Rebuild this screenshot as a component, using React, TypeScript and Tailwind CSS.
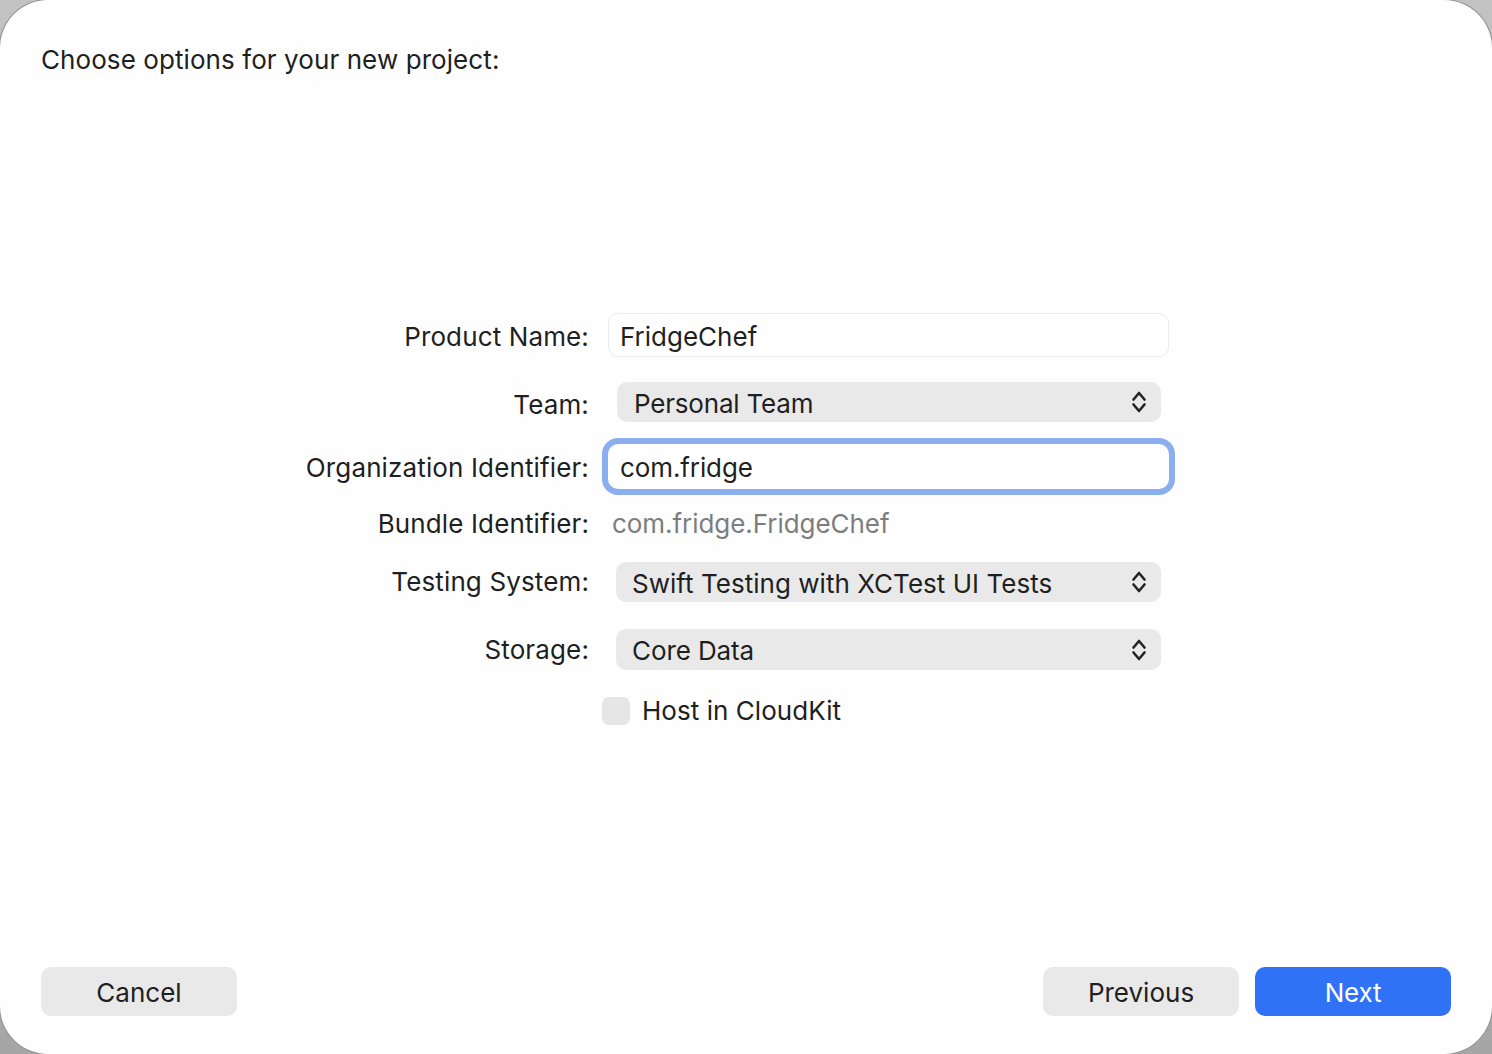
import { ReactNode } from "react";

const font = { fontFamily: "Inter, 'Noto Sans', sans-serif" };

function Chevrons() {
  return (
    <svg width="16" height="26" viewBox="0 0 16 26" fill="none" className="shrink-0">
      <path d="M2.5 10.5 L8 4 L13.5 10.5" stroke="#232323" strokeWidth="2.6" strokeLinecap="round" strokeLinejoin="round" />
      <path d="M2.5 15.5 L8 22 L13.5 15.5" stroke="#232323" strokeWidth="2.6" strokeLinecap="round" strokeLinejoin="round" />
    </svg>
  );
}

function Row({
  label,
  className,
  labelClass = "",
  children,
}: {
  label: string;
  className: string;
  labelClass?: string;
  children: ReactNode;
}) {
  return (
    <div className={`flex items-center ${className}`}>
      <div className={`w-[589px] shrink-0 text-right tracking-[0.13px] whitespace-nowrap ${labelClass}`}>{label}</div>
      {children}
    </div>
  );
}

function Select({ value, className, textClass = "" }: { value: string; className: string; textClass?: string }) {
  return (
    <div className={`flex h-full items-center justify-between rounded-[10px] bg-[#e9e9e9] pr-[14px] ${className}`}>
      <span className={textClass}>{value}</span>
      <Chevrons />
    </div>
  );
}

export default function App() {
  return (
    <div className="h-[1054px] w-[1492px] overflow-hidden bg-gradient-to-b from-[#c2c2c2] to-[#a6a6a6]">
      <div
        style={font}
        className="flex h-full w-full flex-col rounded-[48px] bg-[#fefefe] text-[26px] leading-[32px] tracking-[-0.2px] text-[#1f1f1f] shadow-[0_0_0_1px_#939393]"
      >
        <div className="pl-[41px] pt-[44px] tracking-[0.08px]">Choose options for your new project:</div>

        <div className="mt-[237px] flex flex-col">
          <Row label="Product Name:" labelClass="pt-[4px]" className="h-[44px]">
            <div className="ml-[19px] flex h-full w-[561px] items-center rounded-[10px] border border-[#ececec] bg-white pl-[11px] pt-[4px] tracking-normal">
              FridgeChef
            </div>
          </Row>
          <Row label="Team:" labelClass="pt-[6px]" className="mt-[25px] h-[40px]">
            <Select value="Personal Team" textClass="pt-[3px]" className="ml-[28px] w-[544px] pl-[17px]" />
          </Row>
          <Row label="Organization Identifier:" labelClass="pt-[2px]" className="mt-[22px] h-[45px]">
            <div className="ml-[19px] flex h-full w-[561px] items-center rounded-[10px] bg-white pl-[12px] pt-[2px] tracking-[-0.1px] shadow-[0_0_0_6px_#8aaef0]">
              com.fridge
            </div>
          </Row>
          <Row label="Bundle Identifier:" className="mt-[19px] h-[32px]">
            <span className="ml-[23px] tracking-[-0.05px] text-[#7d7d7d]">com.fridge.FridgeChef</span>
          </Row>
          <Row label="Testing System:" className="mt-[22px] h-[40px]">
            <Select
              value="Swift Testing with XCTest UI Tests"
              textClass="pt-[3px] tracking-[0.03px]"
              className="ml-[27px] w-[545px] pl-[16px]"
            />
          </Row>
          <Row label="Storage:" className="mt-[27px] h-[41px]">
            <Select value="Core Data" textClass="pt-[3px] tracking-[-0.1px]" className="ml-[27px] w-[545px] pl-[16px]" />
          </Row>
          <div className="mt-[27px] flex h-[28px] items-center pl-[602px]">
            <div className="h-[28px] w-[28px] rounded-[7px] bg-[#e6e6e6]" />
            <span className="ml-[12px] pb-[1px] tracking-[0.05px]">Host in CloudKit</span>
          </div>
        </div>

        <div className="mt-auto flex items-center justify-between px-[41px] pb-[38px]">
          <button className="h-[49px] w-[196px] rounded-[10px] bg-[#e9e9e9] pt-[2px] tracking-normal">Cancel</button>
          <div className="flex gap-[16px]">
            <button className="h-[49px] w-[196px] rounded-[10px] bg-[#e9e9e9] pt-[2px] tracking-normal">Previous</button>
            <button className="h-[49px] w-[196px] rounded-[10px] bg-[#2f72f5] pt-[2px] text-white">Next</button>
          </div>
        </div>
      </div>
    </div>
  );
}
